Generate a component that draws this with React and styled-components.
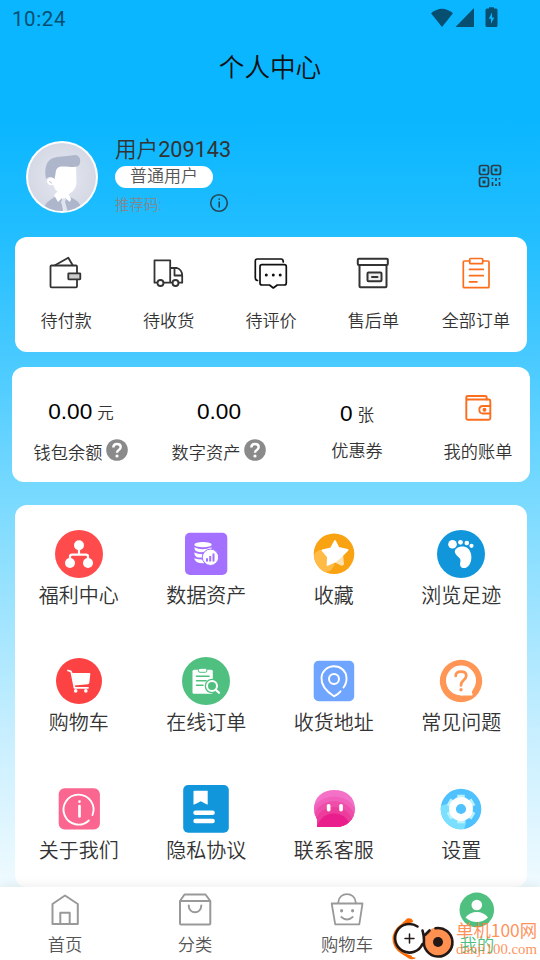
import React from 'react';
import styled, { createGlobalStyle } from 'styled-components';

const GlobalStyle = createGlobalStyle`
  * {
    box-sizing: border-box;
  }

  body {
    margin: 0;
    font-family: Roboto, 'Noto Sans CJK SC', sans-serif;
    font-weight: 350;
    color: #333;
  }

  svg {
    display: block;
    flex-shrink: 0;
  }
`

const Page = styled.div`
  position: relative;
  width: 540px;
  height: 960px;
  overflow: hidden;
  display: flex;
  flex-direction: column;
  background: linear-gradient(#09b6ff 0, #09b6ff 115px, #22beff 235px, #49caff 360px, #7adaff 500px, #c9efff 740px, #effaff 885px, #fff 960px);
`

const StatusBar = styled.div`
  height: 37px;
  padding: 0 41px 0 12px;
  display: flex;
  align-items: center;
  justify-content: space-between;
  color: #064f70;
  font-size: 20.5px;
  font-weight: 400;
  letter-spacing: .6px;

  svg {
    margin-top: -2px;
  }
`

const Title = styled.h1`
  height: 60px;
  margin: 0;
  font-size: 25.6px;
  font-weight: 350;
  line-height: 62px;
  text-align: center;
  color: #111;
`

const Profile = styled.div`
  height: 140px;
  padding: 44px 38px 0 26px;
  display: flex;
  align-items: flex-start;
`

const User = styled.div`
  flex: 1;
  margin: -6px 0 0 17px;
`

User.Name = styled.div`
  height: 31px;
  font-size: 21.6px;
  line-height: 29px;

  span {
    font-weight: 400;
  }
`

User.Level = styled.div`
  width: 98px;
  height: 22px;
  border-radius: 11px;
  background: #fff;
  color: #555;
  font-size: 17px;
  line-height: 21px;
  text-align: center;
`

User.Code = styled.div`
  width: 114px;
  height: 30px;
  display: flex;
  align-items: center;
  justify-content: space-between;
  color: #80888f;
  font-size: 14.5px;
`

const QrButton = styled.div`
  margin-top: 23px;
`

const Card = styled.div`
  height: 115px;
  margin: 0 13px 0 15px;
  border-radius: 12px;
  background: #fff;
  display: flex;
`

const WalletCard = styled(Card)`
  margin: 15px 10px 0 12px;
`

const Order = styled.div`
  flex: 1;
  padding-top: 18px;
  display: flex;
  flex-direction: column;
  align-items: center;
  font-size: 17.1px;
  line-height: 24px;

  span {
    margin-top: 18px;
  }
`

const Asset = styled.div`
  width: ${props => props.$width || 138}px;
  padding-top: ${props => props.$top || 29}px;
  display: flex;
  flex-direction: column;
  align-items: center;
`

Asset.Value = styled.div`
  height: 30px;
  display: flex;
  align-items: baseline;
  color: #000;
  font-family: 'Liberation Sans', 'Noto Sans CJK SC', sans-serif;
  font-size: 22.6px;
  line-height: 31px;

  small {
    margin-left: 5px;
    color: #333;
    font-family: 'Noto Sans CJK SC', sans-serif;
    font-size: 16.5px;
    line-height: 26px;
  }
`

Asset.Label = styled.div`
  height: 26px;
  margin-top: ${props => props.$gap}px;
  display: flex;
  gap: 4px;
  font-size: 17.2px;
  line-height: 28px;
`

const Menu = styled.div`
  height: 382px;
  margin: 23px 13px 0 15px;
  padding: 25px 2px 0 0;
  border-radius: 12px;
  background: #fff;
  display: grid;
  grid-template-columns: repeat(4, 1fr);
  grid-auto-rows: 127.4px;
`

const MenuItem = styled.div`
  display: flex;
  flex-direction: column;
  align-items: center;
  font-size: 20px;
  line-height: 36px;
`

const TabBar = styled.div`
  height: 73px;
  display: flex;
  flex-shrink: 0;
  background: #fff;
  box-shadow: 0 0 12px rgba(0, 0, 0, .09);
`

const Tab = styled.div`
  width: 130px;
  flex-shrink: 0;
  padding-top: 4px;
  display: flex;
  flex-direction: column;
  align-items: center;
  color: ${props => props.$active ? '#4fbf7f' : '#555'};
  font-size: 17.3px;
  line-height: 29px;

  &:nth-child(3) {
    margin-left: 22px;
  }

  span {
    margin-top: 4px;
  }
`

const Watermark = styled.div`
  position: absolute;
  left: 391px;
  top: 917px;
  display: flex;
  color: rgba(255, 125, 60, .85);
  white-space: nowrap;
`

Watermark.Text = styled.div`
  margin: 2px 0 0 1px;
  font-family: 'Noto Sans CJK SC', sans-serif;
  font-weight: 400;
  font-size: 17.4px;
  line-height: 22px;

  div + div {
    font-family: 'Liberation Serif', serif;
    font-size: 14.8px;
    line-height: 16px;
  }
`

// Outline icon shared by the order card and the tab bar
const Line = ({ size = 36, color = '#333', width = 1.6, children }) => (
  <svg width={size} height={size} viewBox={`0 0 ${size} ${size}`} fill="none" stroke={color} strokeWidth={width} strokeLinecap="round" strokeLinejoin="round">
    {children}
  </svg>
)

// Filled icon of the menu
const Badge = ({ children }) => (
  <svg width="48" height="48" viewBox="0 0 48 48" fill="#fff" strokeLinecap="round" strokeLinejoin="round">
    {children}
  </svg>
)

const StatusIcons = () => (
  <svg width="68" height="22" viewBox="0 0 68 22" fill="#064f70">
    <path d="M0 6.3Q11 -3 22 6.3L11 20Z" />
    <path d="M43 1V20H24.5Z" />
    <path fillRule="evenodd" d="M58 1.500V.3h5v1.200h2q1.500 0 1.500 1.500v15.500q0 1.500-1.500 1.500h-9q-1.500 0-1.500-1.500V3q0-1.500 1.500-1.500ZM61 5.500l-3.200 6.300h2.200v5l3.300-6.400h-2.300Z" />
  </svg>
)

const Avatar = () => (
  <svg width="72" height="72" viewBox="0 0 72 72">
    <defs>
      <clipPath id="face"><circle cx="36" cy="36" r="34" /></clipPath>
      <radialGradient id="shade"><stop offset="0" stopColor="#e6e8f0" /><stop offset="1" stopColor="#d5d9e5" /></radialGradient>
    </defs>
    <circle cx="36" cy="36" r="36" fill="#fff" />
    <circle cx="36" cy="36" r="34" fill="url(#shade)" />
    <g clipPath="url(#face)">
      <path d="M18 66Q21 60 29 56L38 54L46 57Q53 60 55 66V72H18Z" fill="#aeb6cc" />
      <path d="M31 51L28 54L32 61L36 57L37 70H41L38 61L39 57L44 61L45 58L42 52Z" fill="#fff" />
      <path d="M37 57L35 61L38 71H42L39 61L40 58Z" fill="#dfe3ed" />
      <path d="M29 26Q34 23 50 25L50.500 43Q49 50 43 53Q39 55 34 52Q28 49 27.500 44Q21 45 21 40Q22 35 27 37Z" fill="#fff" />
      <path d="M20 38C18 27 20 18 30 16.200C38 15 45 15 49 14C53 14 55 18 54 22C53 27 47 26 38 25.500C32 25 30 27 29.500 33L28.500 38C25 35 22 36 20 38Z" fill="#aeb6cc" />
    </g>
    <path d="M23 40.500q2 0 2.500 2" fill="none" stroke="#aeb6cc" strokeWidth=".8" />
  </svg>
)

const Info = () => (
  <Line size={20} color="#264757" width={1.6}>
    <circle cx="10" cy="10" r="8.300" />
    <path d="M10.200 9V14M10.200 6V6.200" />
  </Line>
)

const Qr = () => (
  <Line size={24} color="#2b3d47" width={1.7}>
    <rect x="1.500" y="1.500" width="9" height="9" rx="2" />
    <rect x="13.500" y="1.500" width="9" height="9" rx="2" />
    <rect x="1.500" y="13.500" width="9" height="9" rx="2" />
    <path d="M4.500 4.500h3v3h-3ZM16.500 4.500h3v3h-3ZM4.500 16.500h3v3h-3Z" fill="#2b3d47" stroke="none" />
    <path d="M14.500 14V15M14.500 18V22M18 14V17M18 20V22M21.500 14V15.500M21.500 18V22" strokeLinecap="butt" />
  </Line>
)

const Help = () => (
  <svg width="22" height="22" viewBox="0 0 22 22" fill="none">
    <circle cx="11" cy="11" r="10.800" fill="#8a8a8a" />
    <path d="M7.300 8.500Q7.300 5 11 5Q14.700 5 14.700 8Q14.700 9.600 12.800 10.900Q11 12 11 13.700" stroke="#fff" strokeWidth="2.400" />
    <circle cx="11" cy="17" r="1.600" fill="#fff" />
  </svg>
)

const orders = [
  {
    name: '待付款',
    icon: (
      <Line width={1.8}>
        <path d="M7 10.300L20.300 2.700L24.700 10.300" />
        <rect x="2.500" y="10.500" width="26.500" height="21.800" rx="1" />
        <rect x="20.300" y="18.300" width="12" height="6" rx=".5" fill="#ccc" />
      </Line>
    )
  },
  {
    name: '待收货',
    icon: (
      <Line width={1.8}>
        <path d="M6.200 27.700H3.500V5.300H19.200V27.700H12.600M19.200 27.700H21.500M19.200 13H26Q31.200 15 31.200 20.500V27.700H27.600M23.500 13V20.500H31.200" />
        <circle cx="9.500" cy="28" r="3" />
        <circle cx="24.500" cy="28" r="3" />
      </Line>
    )
  },
  {
    name: '待评价',
    icon: (
      <Line color="#111" width={1.7}>
        <path d="M4.500 25.500Q2.300 25 2.300 23V6Q2.300 4 4.300 4H28Q30.300 4 30.300 7" />
        <path d="M9 9.700H31.300Q33.300 9.700 33.300 11.700V28Q33.300 30 31.300 30H24.300L20.300 33L16.500 30H9Q7 30 7 28V11.700Q7 9.700 9 9.700Z" />
        <path d="M13.300 19.900V20.100M20.300 19.900V20.100M27.200 19.900V20.100" strokeWidth="3" />
      </Line>
    )
  },
  {
    name: '售后单',
    icon: (
      <Line width={2}>
        <rect x="2.800" y="3.700" width="30" height="6.300" rx="1" />
        <path d="M4.500 10V31.300Q4.500 32.300 5.500 32.300H30.500Q31.500 32.300 31.500 31.300V10" />
        <rect x="12.500" y="17.600" width="14" height="8.700" rx="1" fill="#eee" />
        <path d="M17 22H22.500" />
      </Line>
    )
  },
  {
    name: '全部订单',
    icon: (
      <Line color="#fb6e1e" width={1.7}>
        <path d="M11.700 6H6.300Q5.300 6 5.300 7V31.700Q5.300 32.700 6.300 32.700H30Q31 32.700 31 31.700V7Q31 6 30 6H24.700" />
        <rect x="11.700" y="3.500" width="13" height="5.200" rx="1" />
        <path d="M11.500 14.400H25.300M11.500 20.700H25.300M11.500 26.800H19" />
      </Line>
    )
  }
]

const menu = [
  {
    name: '福利中心',
    icon: (
      <Badge>
        <circle cx="24" cy="24" r="24" fill="#ff4b4c" />
        <path d="M24 17V24.700M15 31V26.700Q15 24.700 17 24.700H31Q33 24.700 33 26.700V31" fill="none" stroke="#fff" strokeWidth="2.200" />
        <circle cx="24" cy="15.300" r="5" />
        <circle cx="15" cy="33" r="5" />
        <circle cx="33" cy="33" r="5" />
      </Badge>
    )
  },
  {
    name: '数据资产',
    icon: (
      <Badge>
        <rect x="3" y="2.700" width="42.300" height="42.300" rx="5" fill="#a370ff" />
        <ellipse cx="21" cy="14.700" rx="8.700" ry="2.600" />
        <path d="M12.300 17.300Q20 21 29.500 17.300V20Q20 23.500 14.500 21.300Q12.300 20.500 12.300 17.300Z" />
        <path d="M12.300 22.500Q17 25 25 24V27.500H16Q12.300 26.500 12.300 22.500ZM12.300 28.300Q17 30 22 29.500V33.300Q12.500 33.500 12.300 28.300Z" />
        <circle cx="28.500" cy="27.300" r="8.200" stroke="#a370ff" strokeWidth="1" />
        <path d="M25 28.300V31.500M28.200 26V31.500M31.500 23.500V31.500" fill="none" stroke="#a370ff" strokeWidth="2" strokeLinecap="butt" />
      </Badge>
    )
  },
  {
    name: '收藏',
    icon: (
      <Badge>
        <clipPath id="coin"><circle cx="24" cy="23.800" r="20.300" /></clipPath>
        <circle cx="24" cy="23.800" r="20.300" fill="#f9a313" />
        <circle cx="13.500" cy="31" r="11.500" fill="#ffbb46" clipPath="url(#coin)" />
        <path d="M33 24L34 34.500Q33 36 31 35.500L24 32Z" fill="#fde2b0" />
        <path d="M25 11L28.500 18L37.500 20L31.500 26L25 31.500L17.500 35L18 27L12.500 20.500L21 18.500Z" stroke="#fff" strokeWidth="1.800" />
      </Badge>
    )
  },
  {
    name: '浏览足迹',
    icon: (
      <Badge>
        <circle cx="24" cy="24" r="24" fill="#1296db" />
        <circle cx="15.500" cy="14.200" r="4.300" />
        <circle cx="23.500" cy="12.300" r="2.400" />
        <circle cx="29.800" cy="13" r="2.300" />
        <circle cx="34.500" cy="15.800" r="2.100" />
        <path d="M17.800 21.500C18 17.500 26 14.500 31 18.500C37 24 34.500 37 28 38C23 38.500 22.500 35 23.500 31C24 27 18 26 17.800 21.500Z" />
      </Badge>
    )
  },
  {
    name: '购物车',
    icon: (
      <Badge>
        <circle cx="24" cy="24" r="23" fill="#fd4243" />
        <path d="M13 13.500L15.800 14.300Q16.500 15 17 18L19.500 30.800H33" fill="none" stroke="#fff" strokeWidth="1.800" />
        <path d="M17 16H34.500Q35.500 16 35.300 17L34.300 26Q34 27 33 27.200L19.500 28.500Z" />
        <circle cx="20.700" cy="33.900" r="1.800" />
        <circle cx="30.800" cy="33.900" r="1.800" />
      </Badge>
    )
  },
  {
    name: '在线订单',
    icon: (
      <Badge>
        <circle cx="24" cy="24" r="24" fill="#50c080" />
        <rect x="10.500" y="12.700" width="20.300" height="24" rx="1.500" />
        <rect x="16.500" y="11.300" width="8.300" height="4" rx="1.500" stroke="#50c080" />
        <path d="M14.500 19.200H27M14.500 23.700H24M14.500 28.300H21" stroke="#50c080" strokeWidth="1.600" fill="none" />
        <circle cx="30" cy="29" r="7.300" fill="#50c080" />
        <circle cx="30" cy="29" r="5" fill="none" stroke="#fff" strokeWidth="2" />
        <path d="M33.700 32.700L37 35.800" stroke="#fff" strokeWidth="2.200" />
      </Badge>
    )
  },
  {
    name: '收货地址',
    icon: (
      <Badge>
        <rect x="3.700" y="3.800" width="40.500" height="40.500" rx="5" fill="#70a5ff" />
        <path d="M33.500 30.500C36 27 36.800 24 36.500 20.500C36 14 31 9.300 24 9.300C17 9.300 12 14.500 11.500 20.500C11 28 16.500 34.500 24 39.300Q28 37.500 30.500 34.300" fill="none" stroke="#fff" strokeWidth="1.900" />
        <circle cx="24" cy="22" r="5" fill="none" stroke="#fff" strokeWidth="2" />
      </Badge>
    )
  },
  {
    name: '常见问题',
    icon: (
      <Badge>
        <circle cx="24" cy="24" r="21.200" fill="#ff9655" />
        <circle cx="24" cy="23.500" r="15" />
        <path d="M24 38.500H35.300Q36 37.500 34.800 35L36 32.500L30 28Z" />
        <path d="M18.700 19Q18.700 14.700 24 14.700Q29.300 14.700 29.300 18.500Q29.300 21 26.500 23.300Q24 25 24 28.500" fill="none" stroke="#ff9655" strokeWidth="2.700" />
        <circle cx="24" cy="32.800" r="1.700" fill="#ff9655" />
      </Badge>
    )
  },
  {
    name: '关于我们',
    icon: (
      <Badge>
        <rect x="3.700" y="3.200" width="41.200" height="41.200" rx="6" fill="#fa668f" />
        <path d="M33.800 35.500A15 15 0 1 1 37.500 30" fill="none" stroke="#fff" strokeWidth="1.900" />
        <path d="M24.500 21V31.500M24.500 16.500V16.600" stroke="#fff" strokeWidth="2.700" />
      </Badge>
    )
  },
  {
    name: '隐私协议',
    icon: (
      <Badge>
        <rect x="1.200" y="0" width="45.600" height="47.800" rx="5" fill="#1296db" />
        <path d="M11.500 6.500Q11.500 5.800 12.200 5.800H25.700V19.800L22.500 18.300L18.800 16.200L15 18.300L11.500 19.800Z" />
        <rect x="11.300" y="25.500" width="21.500" height="4.500" rx="2.200" />
        <rect x="11.300" y="33.800" width="21.500" height="4.500" rx="2.200" />
      </Badge>
    )
  },
  {
    name: '联系客服',
    icon: (
      <Badge>
        <clipPath id="bubble"><path d="M7 42V34Q4 29 4 23.500C4 12 13 5 24.500 5S45 12 45 23.500S36 42 26 42Z" /></clipPath>
        <g clipPath="url(#bubble)">
          <rect width="48" height="48" fill="#f471c8" />
          <circle cx="24" cy="37" r="25.500" fill="#f161bb" />
          <circle cx="24" cy="38.500" r="22.500" fill="#ee4eaa" />
          <circle cx="24" cy="42" r="20" fill="#ec3c9c" />
          <circle cx="24" cy="46" r="17.500" fill="#e91e8c" />
        </g>
        <rect x="16.800" y="19" width="3.700" height="7.500" rx="1.800" />
        <rect x="29.200" y="19" width="3.700" height="7.500" rx="1.800" />
      </Badge>
    )
  },
  {
    name: '设置',
    icon: (
      <Badge>
        <clipPath id="disc"><circle cx="24" cy="24" r="20.300" /></clipPath>
        <circle cx="24" cy="24" r="20.300" fill="#50c1ff" />
        <circle cx="12" cy="36" r="17" fill="#7be0ff" clipPath="url(#disc)" />
        <path d="M24 9.700V38.300M11.600 16.800L36.400 31.200M11.600 31.200L36.400 16.800" stroke="#bdf2fb" strokeWidth="7.500" strokeLinecap="butt" />
        <circle cx="24" cy="24" r="8.500" fill="#50c1ff" stroke="#fff" strokeWidth="6.800" />
      </Badge>
    )
  }
]

const tabs = [
  {
    name: '首页',
    icon: (
      <Line color="#999" width={2}>
        <path d="M18 4.500L5.500 13V33H30.800V13ZM13.300 33V21.700H22.700V33" />
      </Line>
    )
  },
  {
    name: '分类',
    icon: (
      <Line color="#999" width={2}>
        <path d="M7.500 3.500H28.500L33.300 10V32.500Q33.300 33.500 32.300 33.500H4Q3 33.500 3 32.500V10ZM3 10H33M11.700 14.500C12 23.500 24 23.500 24.300 14.500" />
      </Line>
    )
  },
  {
    name: '购物车',
    icon: (
      <Line color="#999" width={1.8}>
        <path d="M2.700 12.500H33.500L30.300 33.300H6.200ZM9.300 12V11C10 .5 26 .5 26.700 11V12M12.300 26Q18 31 23.700 26" />
        <path d="M12.600 19.700V19.800M23.600 19.700V19.800" strokeWidth="3.200" />
      </Line>
    )
  },
  {
    name: '我的',
    active: true,
    icon: (
      <svg width="36" height="36" viewBox="0 0 36 36" fill="#fff">
        <circle cx="17.800" cy="18.900" r="17.300" fill="#50c080" />
        <circle cx="17.800" cy="14" r="5.300" />
        <path d="M6.500 26.500Q11 21 17.800 21T29 26.500Q24 31 17.800 31T6.500 26.500Z" />
      </svg>
    )
  }
]

const Logo = () => (
  <svg width="64" height="43" viewBox="0 0 64 43" fill="none" strokeLinecap="round">
    <path d="M21 4.500C10 6 2.500 13 2.500 22C2.500 31 10 37 20 39.500" stroke="#ff6a00" strokeWidth="2" />
    <path d="M10 7Q14 4 16 1.500Q21 0 22 4.500Q15 4.500 10 7ZM9 34Q14 38 25 41Q21 43.500 17 41Q12 38 9 34Z" fill="#ff6a00" />
    <path d="M26.500 9.500A14.300 14.300 0 1 0 31.500 27" stroke="#231815" strokeWidth="2.600" />
    <path d="M18.500 17V26M14 21.500H23" stroke="#231815" strokeWidth="1.500" />
    <circle cx="47" cy="25" r="14.500" fill="#ff9050" />
    <path d="M44.500 11.200A14.300 14.300 0 1 1 33 23C33 18 32 16 31.500 13.500M34 18L38.500 13.500" stroke="#231815" strokeWidth="2.600" />
    <circle cx="47" cy="25" r="5" fill="#231815" />
  </svg>
)

const Bill = () => (
  <Line size={28} color="#fb6e1e" width={1.9}>
    <path d="M2.300 5.500V3.500Q2.300 2 4 2H21Q22.700 2 22.700 3.500V5.500" />
    <rect x="2.300" y="5.500" width="24" height="20.300" rx="1.500" />
    <path d="M26.300 12H19Q15.300 12 15.300 15.800T19 19.500H26.300" />
    <circle cx="20.500" cy="15.800" r="1" fill="#fb6e1e" />
  </Line>
)

export default function App() {
  return (
    <Page>
      <GlobalStyle />
      <StatusBar>
        10:24
        <StatusIcons />
      </StatusBar>
      <Title>个人中心</Title>
      <Profile>
        <Avatar />
        <User>
          <User.Name>用户<span>209143</span></User.Name>
          <User.Level>普通用户</User.Level>
          <User.Code>推荐码:<Info /></User.Code>
        </User>
        <QrButton><Qr /></QrButton>
      </Profile>
      <Card>
        {orders.map(({ name, icon }) => (
          <Order key={name}>{icon}<span>{name}</span></Order>
        ))}
      </Card>
      <WalletCard>
        <Asset>
          <Asset.Value>0.00<small>元</small></Asset.Value>
          <Asset.Label $gap={13}>钱包余额<Help /></Asset.Label>
        </Asset>
        <Asset>
          <Asset.Value>0.00</Asset.Value>
          <Asset.Label $gap={13}>数字资产<Help /></Asset.Label>
        </Asset>
        <Asset $top={31}>
          <Asset.Value>0<small>张</small></Asset.Value>
          <Asset.Label $gap={9}>优惠券</Asset.Label>
        </Asset>
        <Asset $width={104} $top={27}>
          <Bill />
          <Asset.Label $gap={16}>我的账单</Asset.Label>
        </Asset>
      </WalletCard>
      <Menu>
        {menu.map(({ name, icon }) => (
          <MenuItem key={name}>{icon}<span>{name}</span></MenuItem>
        ))}
      </Menu>
      <TabBar>
        {tabs.map(({ name, icon, active }) => (
          <Tab key={name} $active={active}>{icon}<span>{name}</span></Tab>
        ))}
      </TabBar>
      <Watermark>
        <Logo />
        <Watermark.Text>
          <div>单机100网</div>
          <div>danji100.com</div>
        </Watermark.Text>
      </Watermark>
    </Page>
  );
}
